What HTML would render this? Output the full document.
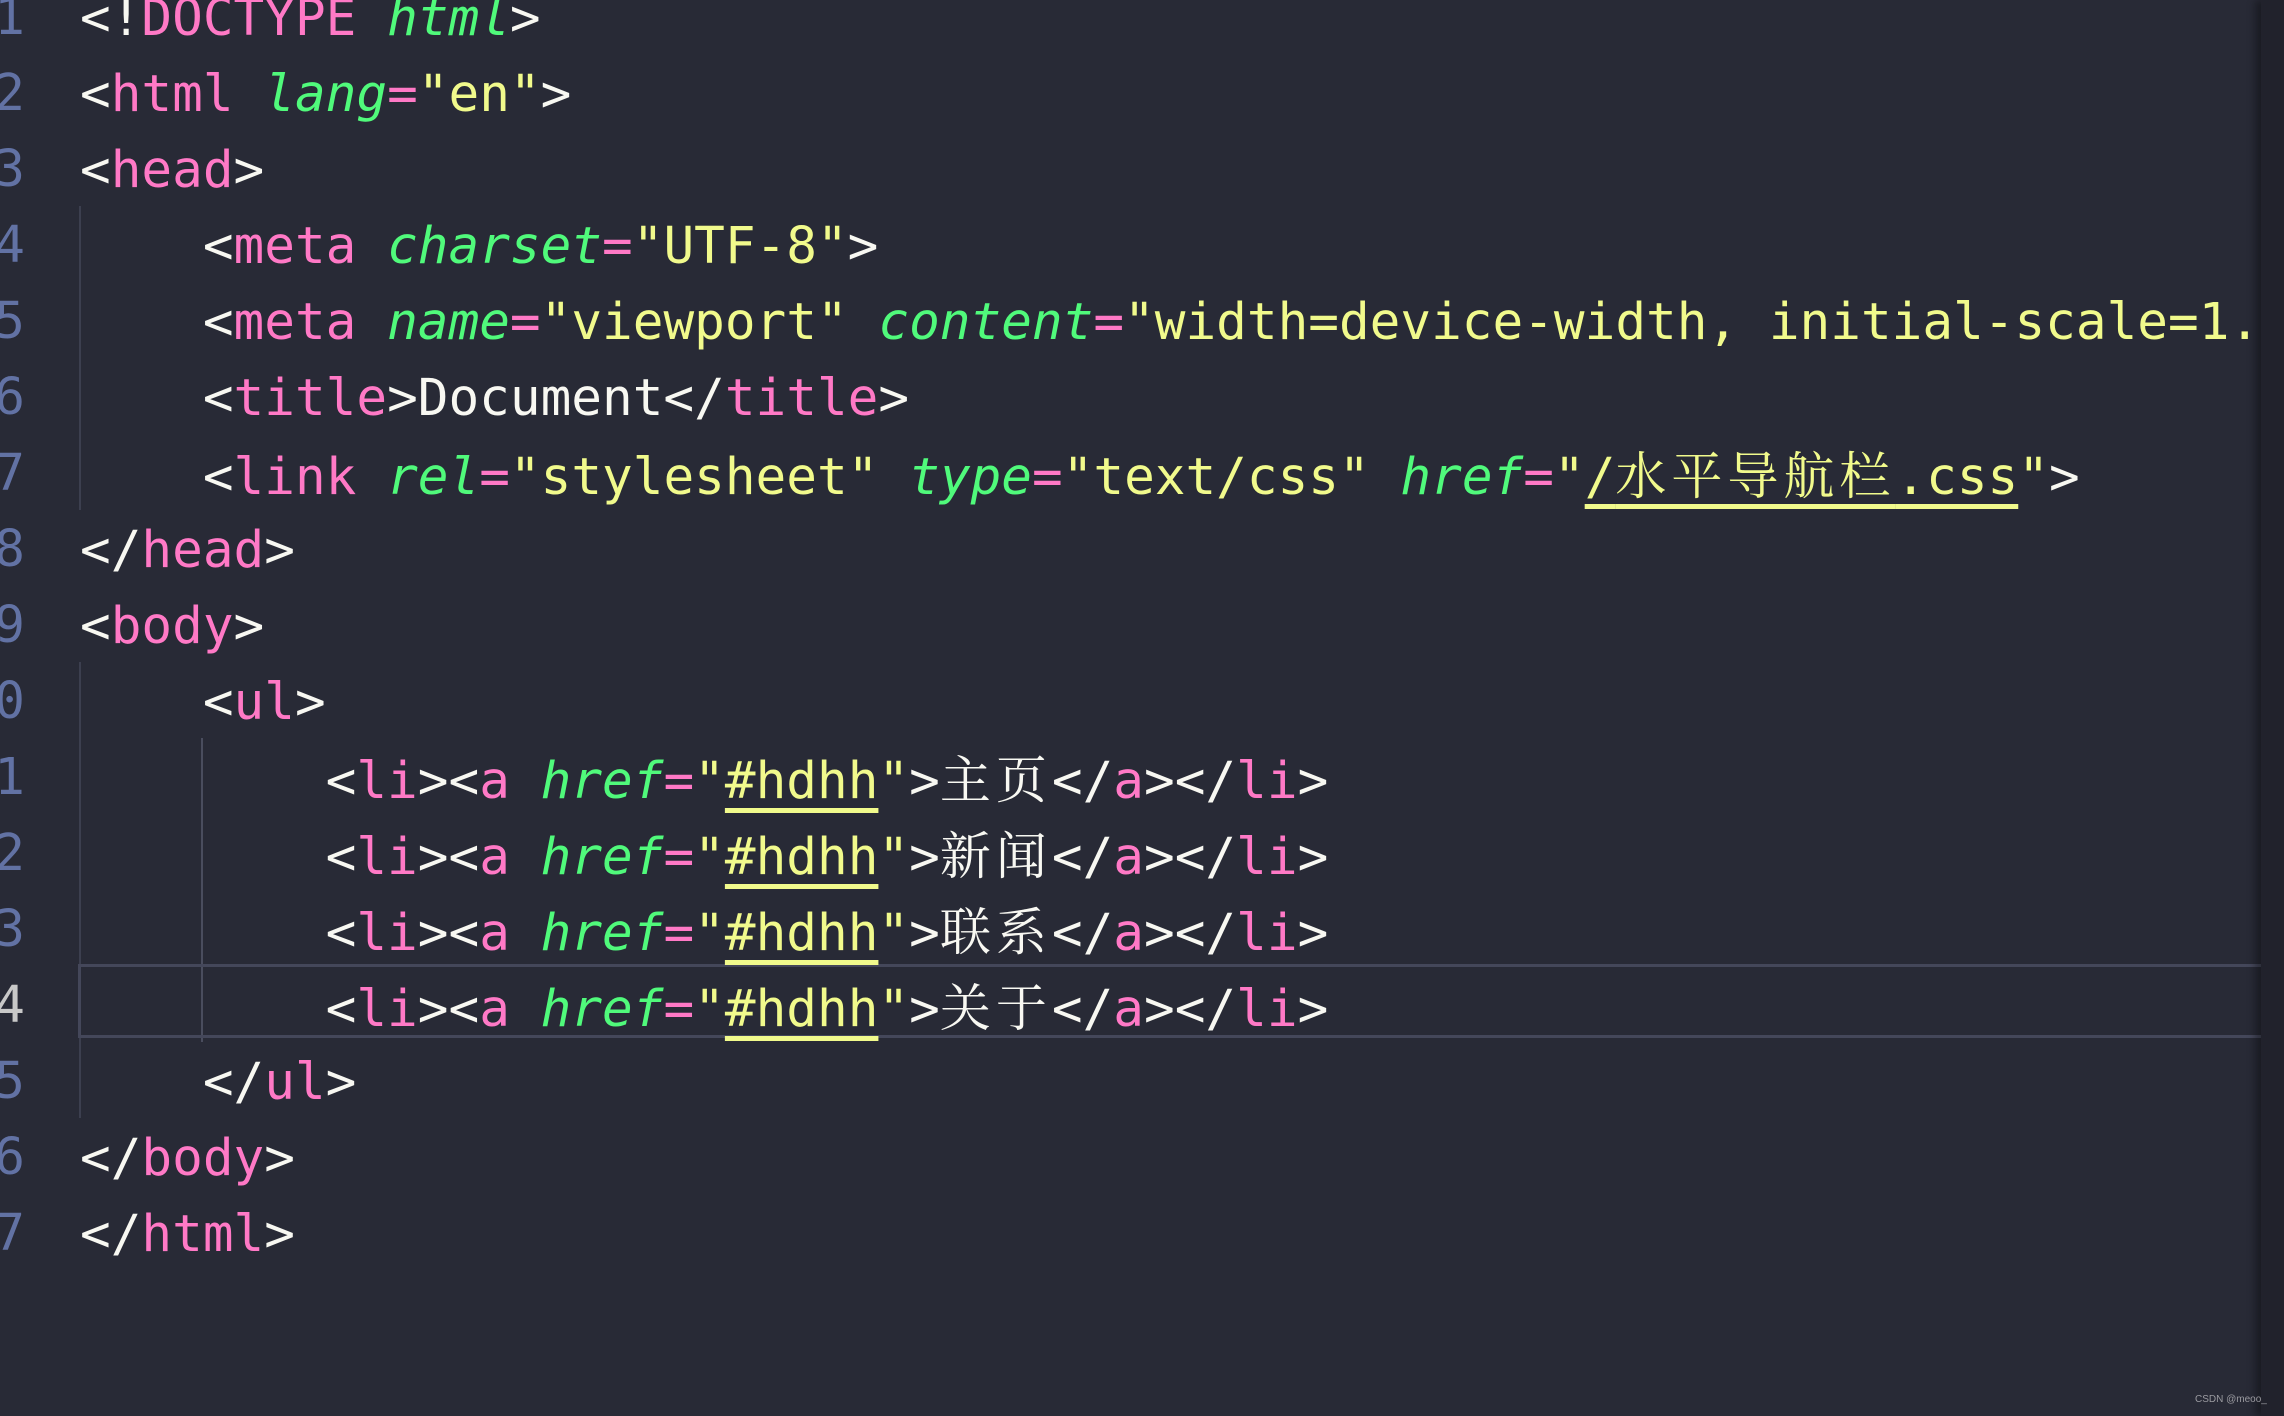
<!DOCTYPE html>
<html><head><meta charset="utf-8"><style>
html,body{margin:0;padding:0;}
body{width:2284px;height:1416px;background:#282a36;position:relative;overflow:hidden;font-family:"DejaVu Sans Mono","Liberation Mono","Noto Sans CJK SC",monospace;font-size:51px;}
.code{position:absolute;left:0;top:0;width:2261px;height:1416px;overflow:hidden;}
.ln{position:absolute;left:-60px;width:85px;text-align:right;color:#6272a4;height:76px;line-height:76px;white-space:pre;}
.l{position:absolute;left:80px;height:76px;line-height:76px;white-space:pre;color:#f8f8f2;}
.p{color:#ff79c6}.g{color:#50fa7b;font-style:italic}.y{color:#f1fa8c}.w{color:#f8f8f2}
.u{text-decoration:underline;text-decoration-thickness:5px;text-underline-offset:10px;text-decoration-color:#f1fa8c}
.c{font-family:"Noto Serif CJK SC",serif;letter-spacing:5px;}
.guide{position:absolute;width:2px;background:#3c3f4f;}
.cur{position:absolute;left:78px;top:964px;width:2183px;height:74px;border:3px solid #44475a;border-right:none;box-sizing:border-box;}
.mm{position:absolute;left:2261px;top:0;width:23px;height:1416px;background:#21222c;box-shadow:-6px 0 8px rgba(0,0,0,.35);}
.wm{position:absolute;left:2195px;top:1394px;font-family:"Liberation Sans",sans-serif;font-size:10px;color:#9a9aa0;}
</style></head><body>
<div class="code">
<div class="guide" style="left:79px;top:206px;height:304px"></div>
<div class="guide" style="left:79px;top:662px;height:456px"></div>
<div class="guide" style="left:201px;top:738px;height:304px;background:#4a4d5e"></div>
<div class="cur"></div>
<div class="ln" style="top:-20px">1</div>
<div class="ln" style="top:56px">2</div>
<div class="ln" style="top:132px">3</div>
<div class="ln" style="top:208px">4</div>
<div class="ln" style="top:284px">5</div>
<div class="ln" style="top:360px">6</div>
<div class="ln" style="top:436px">7</div>
<div class="ln" style="top:512px">8</div>
<div class="ln" style="top:588px">9</div>
<div class="ln" style="top:664px">10</div>
<div class="ln" style="top:740px">11</div>
<div class="ln" style="top:816px">12</div>
<div class="ln" style="top:892px">13</div>
<div class="ln" style="top:968px;color:#c8c8c8">14</div>
<div class="ln" style="top:1044px">15</div>
<div class="ln" style="top:1120px">16</div>
<div class="ln" style="top:1196px">17</div>

<div class="l" style="top:-19px">&lt;!<span class="p">DOCTYPE</span> <span class="g">html</span>&gt;</div>
<div class="l" style="top:57px">&lt;<span class="p">html</span> <span class="g">lang</span><span class="p">=</span><span class="y">"en"</span>&gt;</div>
<div class="l" style="top:133px">&lt;<span class="p">head</span>&gt;</div>
<div class="l" style="top:209px">    &lt;<span class="p">meta</span> <span class="g">charset</span><span class="p">=</span><span class="y">"UTF-8"</span>&gt;</div>
<div class="l" style="top:285px">    &lt;<span class="p">meta</span> <span class="g">name</span><span class="p">=</span><span class="y">"viewport"</span> <span class="g">content</span><span class="p">=</span><span class="y">"width=device-width, initial-scale=1.0"</span>&gt;</div>
<div class="l" style="top:361px">    &lt;<span class="p">title</span>&gt;Document&lt;/<span class="p">title</span>&gt;</div>
<div class="l" style="top:434px">    &lt;<span class="p">link</span> <span class="g">rel</span><span class="p">=</span><span class="y">"stylesheet"</span> <span class="g">type</span><span class="p">=</span><span class="y">"text/css"</span> <span class="g">href</span><span class="p">=</span><span class="y">"<span class="u">/<span class="c">水平导航栏</span>.css</span>"</span>&gt;</div>
<div class="l" style="top:513px">&lt;/<span class="p">head</span>&gt;</div>
<div class="l" style="top:589px">&lt;<span class="p">body</span>&gt;</div>
<div class="l" style="top:665px">    &lt;<span class="p">ul</span>&gt;</div>
<div class="l" style="top:738px">        &lt;<span class="p">li</span>&gt;&lt;<span class="p">a</span> <span class="g">href</span><span class="p">=</span><span class="y">"<span class="u">#hdhh</span>"</span>&gt;<span class="c">主页</span>&lt;/<span class="p">a</span>&gt;&lt;/<span class="p">li</span>&gt;</div>
<div class="l" style="top:814px">        &lt;<span class="p">li</span>&gt;&lt;<span class="p">a</span> <span class="g">href</span><span class="p">=</span><span class="y">"<span class="u">#hdhh</span>"</span>&gt;<span class="c">新闻</span>&lt;/<span class="p">a</span>&gt;&lt;/<span class="p">li</span>&gt;</div>
<div class="l" style="top:890px">        &lt;<span class="p">li</span>&gt;&lt;<span class="p">a</span> <span class="g">href</span><span class="p">=</span><span class="y">"<span class="u">#hdhh</span>"</span>&gt;<span class="c">联系</span>&lt;/<span class="p">a</span>&gt;&lt;/<span class="p">li</span>&gt;</div>
<div class="l" style="top:966px">        &lt;<span class="p">li</span>&gt;&lt;<span class="p">a</span> <span class="g">href</span><span class="p">=</span><span class="y">"<span class="u">#hdhh</span>"</span>&gt;<span class="c">关于</span>&lt;/<span class="p">a</span>&gt;&lt;/<span class="p">li</span>&gt;</div>
<div class="l" style="top:1045px">    &lt;/<span class="p">ul</span>&gt;</div>
<div class="l" style="top:1121px">&lt;/<span class="p">body</span>&gt;</div>
<div class="l" style="top:1197px">&lt;/<span class="p">html</span>&gt;</div>
</div>
<div class="mm"></div>
<div class="wm">CSDN @meoo_</div>
</body></html>
